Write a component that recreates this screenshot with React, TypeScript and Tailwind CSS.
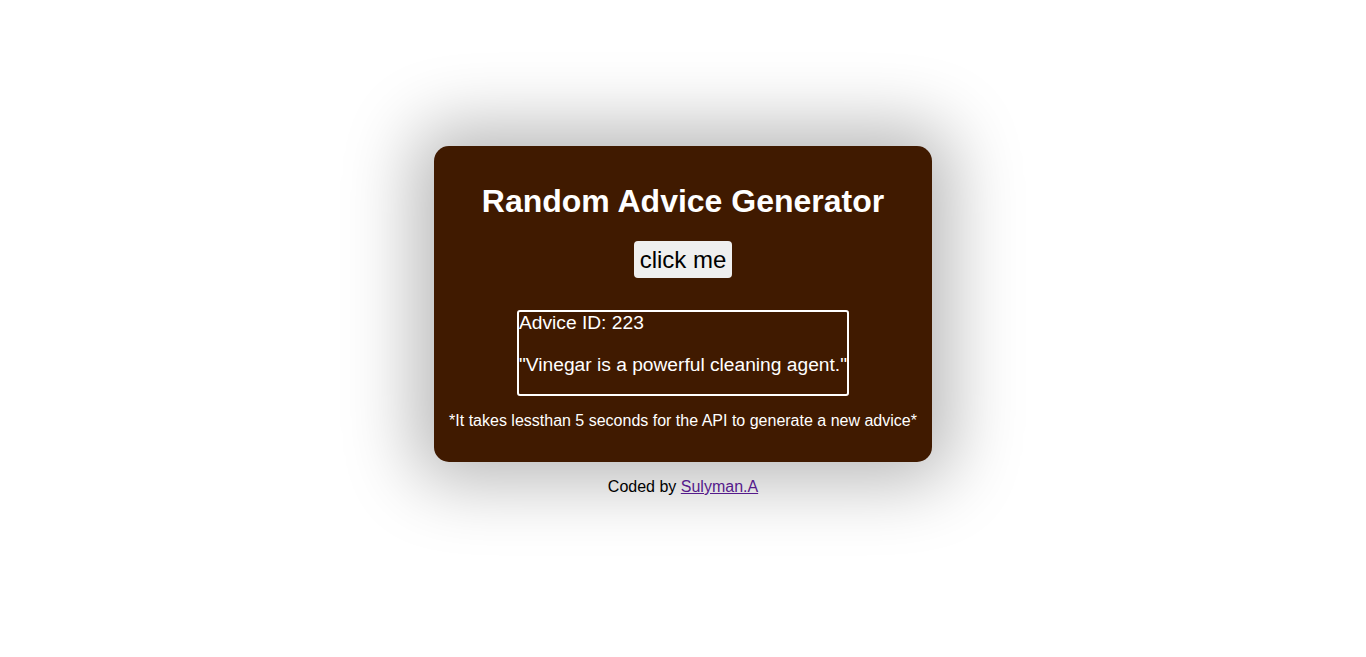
export default function App() {
  return (
    <div className="min-h-screen bg-white flex flex-col items-center pt-[146px] font-['Liberation_Sans',Arial,sans-serif]">
      {/* Card */}
      <div className="w-fit px-[15px] py-4 bg-[#401a00] rounded-[15px] text-center text-white shadow-[0_0_70px_20px_rgba(0,0,0,0.28)]">
        <h1 className="text-[32px] leading-[37px] font-bold mt-[21px] mb-[21px]">
          Random Advice Generator
        </h1>

        <button className="h-[37px] px-[6px] bg-[#efefef] text-black text-[24px] leading-[28px] rounded-[4px]">
          click me
        </button>

        <div className="mt-[32px]">
          <div className="inline-block border-2 border-white rounded-[3px] text-left text-[19.2px] leading-[22px]">
            <p>Advice ID: 223</p>
            <p className="mt-[20px] mb-[18px]">"Vinegar is a powerful cleaning agent."</p>
          </div>
        </div>

        <p className="text-[16px] leading-[18px] mt-[16px] mb-[16px]">
          *It takes lessthan 5 seconds for the API to generate a new advice*
        </p>
      </div>

      <p className="mt-[16px] text-[16px] leading-[18px] text-black">
        Coded by{' '}
        <a href="#" className="text-[#551a8b] underline">
          Sulyman.A
        </a>
      </p>
    </div>
  );
}
